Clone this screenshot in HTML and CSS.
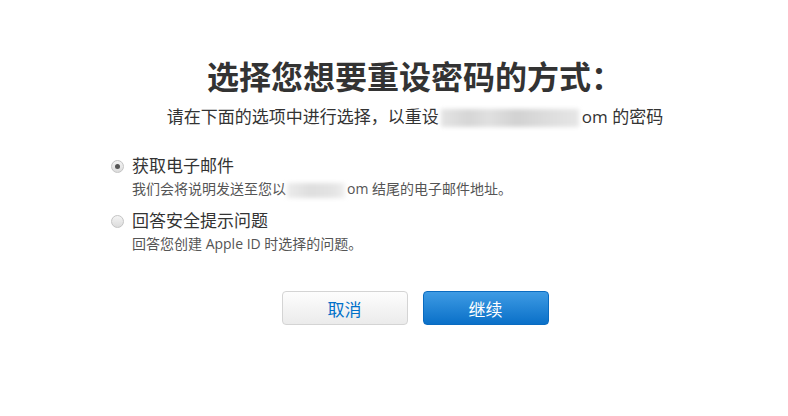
FILE: index.html
```html
<!DOCTYPE html>
<html lang="zh-CN">
<head>
  <meta charset="UTF-8">
  <title>重设密码</title>
  <link rel="stylesheet" href="styles.css">
</head>
<body>
  <div class="container">
    <h1 class="title">选择您想要重设密码的方式：</h1>
    <p class="subtitle">请在下面的选项中进行选择，以重设<span class="blur blur-long"></span>om 的密码</p>

    <div class="options">
      <label class="option">
        <span class="radio checked"></span>
        <span class="option-text">
          <span class="option-title">获取电子邮件</span>
          <span class="option-desc">我们会将说明发送至您以<span class="blur blur-short"></span>om 结尾的电子邮件地址。</span>
        </span>
      </label>
      <label class="option">
        <span class="radio"></span>
        <span class="option-text">
          <span class="option-title">回答安全提示问题</span>
          <span class="option-desc">回答您创建 Apple ID 时选择的问题。</span>
        </span>
      </label>
    </div>

    <div class="buttons">
      <button class="btn btn-cancel">取消</button>
      <button class="btn btn-continue">继续</button>
    </div>
  </div>
</body>
</html>
```

FILE: styles.css
```css
body {
  margin: 0;
  background-color: #fff;
  font-family: "Open Sans", "Noto Sans CJK SC", sans-serif;
  color: #333;
}

.container {
  width: 610px;
  margin-left: 110px;
  padding-top: 57px;
}

.title {
  margin: 0;
  text-align: center;
  font-size: 32px;
  line-height: 40px;
  font-weight: 700;
  color: #333;
}

.subtitle {
  margin: 8px 0 0;
  text-align: center;
  font-size: 17px;
  line-height: 24px;
  color: #333;
}

.blur {
  display: inline-block;
  vertical-align: middle;
  height: 18px;
  filter: blur(2px);
  background: linear-gradient(90deg, #e4e4e4 0%, #d6d6d6 20%, #e0e0e0 35%, #d2d2d2 55%, #dcdcdc 75%, #e6e6e6 100%);
}

.blur-long {
  width: 138px;
  margin: 0 3px 0 2px;
}

.blur-short {
  width: 58px;
  height: 15px;
  margin: 0 2px 0 1px;
  background: linear-gradient(90deg, #ececec 0%, #dedede 40%, #e4e4e4 80%, #f0f0f0 100%);
}

.options {
  margin-top: 25px;
}

.option {
  display: flex;
  align-items: flex-start;
  margin-bottom: 10px;
}

.radio {
  flex: none;
  width: 11px;
  height: 11px;
  margin: 6px 8px 0 1px;
  border: 1px solid #c4c4c4;
  border-radius: 50%;
  background: linear-gradient(#f4f4f4, #dcdcdc);
  display: flex;
  align-items: center;
  justify-content: center;
}

.radio.checked::after {
  content: "";
  width: 5px;
  height: 5px;
  border-radius: 50%;
  background-color: #555;
}

.option-text {
  display: flex;
  flex-direction: column;
}

.option-title {
  font-size: 17px;
  line-height: 24px;
  color: #333;
}

.option-desc {
  margin-top: 1px;
  font-size: 14px;
  line-height: 20px;
  color: #555;
}

.buttons {
  display: flex;
  justify-content: center;
  gap: 15px;
  margin-top: 37px;
}

.btn {
  width: 126px;
  height: 34px;
  border-radius: 4px;
  font-family: "Noto Sans CJK SC", sans-serif;
  font-size: 17px;
  cursor: pointer;
}

.btn-cancel {
  color: #0070c9;
  border: 1px solid #d4d4d4;
  background: linear-gradient(#fdfdfd, #ebebeb);
}

.btn-continue {
  color: #fff;
  border: 1px solid #0a6bc0;
  background: linear-gradient(#3e9be4, #0a70c8);
}
```
